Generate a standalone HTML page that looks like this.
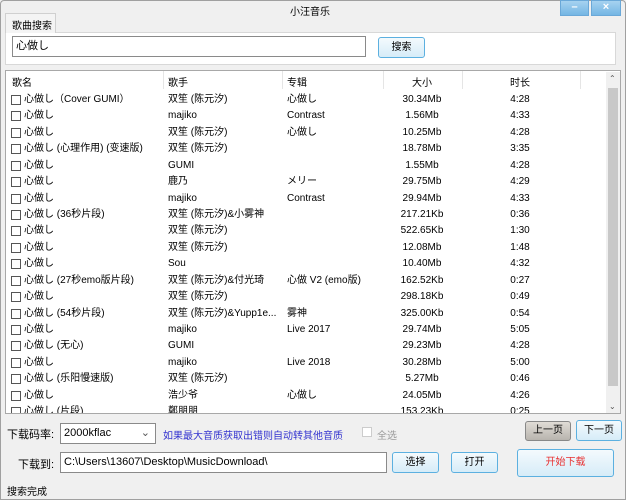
<!DOCTYPE html>
<html><head><meta charset="utf-8"><style>
*{margin:0;padding:0;box-sizing:border-box}
body{width:626px;height:500px;background:#f0f0f0;font-family:"Liberation Sans","Noto Sans CJK SC",sans-serif;font-size:10px;color:#000;position:relative;overflow:hidden}
.a{position:absolute;white-space:nowrap}
.win{position:absolute;left:0;top:0;width:626px;height:500px;border:1px solid #a0a0a0;border-radius:4px 4px 0 0}
.wb{position:absolute;top:0;height:16px;background:linear-gradient(#a6d2f0,#74b6e4);border:1px solid #6aa8d8;color:#fff;text-align:center;font-size:11px;line-height:13px;font-weight:bold}
.btn{position:absolute;border:1px solid #5cb0e0;border-radius:3px;background:linear-gradient(#f4fafd,#d6ecf8);text-align:center;font-size:10px}
.inp{position:absolute;background:#fff;border:1px solid #8a8a8a;padding-left:3px}
.cb{position:absolute;width:10px;height:10px;border:1px solid #555;background:#fff}
.row{position:absolute;left:0;width:600px;height:16px}
.row span{position:absolute;top:0;white-space:nowrap;line-height:16px}
</style></head><body>
<div class="win"></div>
<div class="a" style="left:290px;top:3px;">小汪音乐</div>
<div class="wb" style="left:560px;width:29px;">–</div>
<div class="wb" style="left:591px;width:30px;">×</div>
<div class="a" style="left:5px;top:32px;width:611px;height:33px;background:#fff;border:1px solid #d8d8d8;"></div>
<div class="a" style="left:5px;top:13px;width:51px;height:20px;background:#f4f4f4;border:1px solid #d0d0d0;border-bottom:none;padding:3px 0 0 6px;">歌曲搜索</div>
<div class="inp" style="left:12px;top:36px;width:354px;height:21px;line-height:19px;font-size:11px">心做し</div>
<div class="btn" style="left:378px;top:37px;width:47px;height:21px;line-height:19px">搜索</div>
<div class="a" style="left:5px;top:70px;width:616px;height:344px;background:#fff;border:1px solid #a8a8a8"></div>
<div class="a" style="left:606px;top:72px;width:14px;height:341px;background:#f0f0f0"></div>
<div class="a" style="left:608px;top:88px;width:10px;height:298px;background:#c8c8c8"></div>
<div class="a" style="left:609px;top:74px;font-size:8px;color:#555">⌃</div>
<div class="a" style="left:609px;top:402px;font-size:8px;color:#555">⌄</div>
<div class="a" style="left:6px;top:71px;width:600px;height:18px;background:#fff">
<span class="a" style="left:6px;top:3px">歌名</span>
<span class="a" style="left:162px;top:3px">歌手</span>
<span class="a" style="left:281px;top:3px">专辑</span>
<span class="a" style="left:406px;top:3px">大小</span>
<span class="a" style="left:504px;top:3px">时长</span>
<div class="a" style="left:157px;top:0;width:1px;height:18px;background:#e5e5e5"></div>
<div class="a" style="left:276px;top:0;width:1px;height:18px;background:#e5e5e5"></div>
<div class="a" style="left:377px;top:0;width:1px;height:18px;background:#e5e5e5"></div>
<div class="a" style="left:456px;top:0;width:1px;height:18px;background:#e5e5e5"></div>
<div class="a" style="left:574px;top:0;width:1px;height:18px;background:#e5e5e5"></div>
</div>
<div id="rows" class="a" style="left:0;top:0;width:606px;height:413px;overflow:hidden"></div>
<div class="a" style="left:7px;top:426px;font-size:11px">下载码率:</div>
<div class="inp" style="left:60px;top:423px;width:96px;height:21px;line-height:19px;font-size:11px">2000kflac<span style="position:absolute;right:5px;top:0;color:#555">⌄</span></div>
<div class="a" style="left:163px;top:427px;color:#3434d0">如果最大音质获取出错则自动转其他音质</div>
<div class="a" style="left:362px;top:427px;width:10px;height:10px;border:1px solid #ccc;background:#fff"></div>
<div class="a" style="left:377px;top:427px;color:#999">全选</div>
<div class="btn" style="left:525px;top:421px;width:46px;height:20px;line-height:18px;background:linear-gradient(#e0dcd6,#b8b4ae);border-color:#888">上一页</div>
<div class="btn" style="left:576px;top:420px;width:46px;height:21px;line-height:19px">下一页</div>
<div class="a" style="left:18px;top:456px;font-size:11px">下载到:</div>
<div class="inp" style="left:60px;top:452px;width:327px;height:21px;line-height:19px;font-size:11px">C:\Users\13607\Desktop\MusicDownload\</div>
<div class="btn" style="left:392px;top:452px;width:47px;height:21px;line-height:19px">选择</div>
<div class="btn" style="left:451px;top:452px;width:47px;height:21px;line-height:19px">打开</div>
<div class="btn" style="left:517px;top:449px;width:97px;height:28px;line-height:26px;color:#e83030">开始下载</div>
<div class="a" style="left:7px;top:483px">搜索完成</div>
<script>
var d=[["心做し（Cover GUMI）","双笙 (陈元汐)","心做し","30.34Mb","4:28"],["心做し","majiko","Contrast","1.56Mb","4:33"],["心做し","双笙 (陈元汐)","心做し","10.25Mb","4:28"],["心做し (心理作用) (变速版)","双笙 (陈元汐)","","18.78Mb","3:35"],["心做し","GUMI","","1.55Mb","4:28"],["心做し","鹿乃","メリー","29.75Mb","4:29"],["心做し","majiko","Contrast","29.94Mb","4:33"],["心做し (36秒片段)","双笙 (陈元汐)&小雾神","","217.21Kb","0:36"],["心做し","双笙 (陈元汐)","","522.65Kb","1:30"],["心做し","双笙 (陈元汐)","","12.08Mb","1:48"],["心做し","Sou","","10.40Mb","4:32"],["心做し (27秒emo版片段)","双笙 (陈元汐)&付光琦","心做 V2 (emo版)","162.52Kb","0:27"],["心做し","双笙 (陈元汐)","","298.18Kb","0:49"],["心做し (54秒片段)","双笙 (陈元汐)&Yupp1e...","雾神","325.00Kb","0:54"],["心做し","majiko","Live 2017","29.74Mb","5:05"],["心做し (无心)","GUMI","","29.23Mb","4:28"],["心做し","majiko","Live 2018","30.28Mb","5:00"],["心做し (乐阳慢速版)","双笙 (陈元汐)","","5.27Mb","0:46"],["心做し","浩少爷","心做し","24.05Mb","4:26"],["心做し (片段)","鄭朋朋","","153.23Kb","0:25"]];
var h="";for(var i=0;i<d.length;i++){var y=92+i*16.43;var r=d[i];
h+='<div class="row" style="top:'+y+'px"><div class="cb" style="left:11px;top:3px"></div><span style="left:24px">'+r[0]+'</span><span style="left:168px">'+r[1]+'</span><span style="left:287px">'+r[2]+'</span><span style="left:372px;width:100px;text-align:center">'+r[3]+'</span><span style="left:490px;width:60px;text-align:center">'+r[4]+'</span></div>';}
document.getElementById("rows").innerHTML=h;
</script>
</body></html>
